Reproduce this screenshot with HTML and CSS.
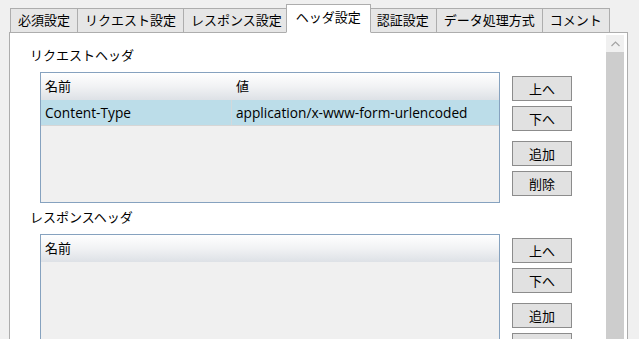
FILE: index.html
```html
<!DOCTYPE html>
<html lang="ja">
<head>
    <meta charset="UTF-8">
    <title>ヘッダ設定</title>
    <link rel="stylesheet" href="styles.css">
</head>
<body>
    <div class="tabs">
        <div class="tab">必須設定</div>
        <div class="tab">リクエスト設定</div>
        <div class="tab">レスポンス設定</div>
        <div class="tab active">ヘッダ設定</div>
        <div class="tab">認証設定</div>
        <div class="tab">データ処理方式</div>
        <div class="tab">コメント</div>
    </div>
    <div class="panel">
        <div class="content">
            <div class="group-title">リクエストヘッダ</div>
            <div class="group">
                <div class="grid">
                    <div class="grid-head">
                        <span class="col-name">名前</span>
                        <span class="col-value">値</span>
                    </div>
                    <div class="grid-row selected">
                        <span class="col-name">Content-Type</span>
                        <span class="col-value">application/x-www-form-urlencoded</span>
                    </div>
                </div>
                <div class="buttons">
                    <button>上へ</button>
                    <button>下へ</button>
                    <button class="spaced">追加</button>
                    <button>削除</button>
                </div>
            </div>

            <div class="group-title second">レスポンスヘッダ</div>
            <div class="group">
                <div class="grid">
                    <div class="grid-head">
                        <span class="col-name">名前</span>
                    </div>
                </div>
                <div class="buttons">
                    <button>上へ</button>
                    <button>下へ</button>
                    <button class="spaced">追加</button>
                    <button>削除</button>
                </div>
            </div>
        </div>
        <div class="scrollbar">
            <div class="scroll-arrow">
                <svg width="9" height="6" viewBox="0 0 9 6"><path d="M0.5 5 L4.5 1 L8.5 5" fill="none" stroke="#a3a3a3" stroke-width="1.2"/></svg>
            </div>
            <div class="scroll-thumb"></div>
        </div>
    </div>
</body>
</html>
```

FILE: styles.css
```css
body {
    margin: 0;
    background-color: #f0f0f0;
    font-family: "Noto Sans CJK JP", "Noto Sans", sans-serif;
    font-size: 13px;
    color: #000;
    overflow: hidden;
    height: 339px;
}
.tabs {
    display: flex;
    align-items: flex-end;
    height: 33px;
    padding-left: 10px;
    position: relative;
    z-index: 1;
}
.tab {
    box-sizing: border-box;
    height: 25px;
    line-height: 22px;
    padding: 0 7px;
    background-color: #e6e6e6;
    border: 1px solid #adadad;
    margin-right: -1px;
    white-space: nowrap;
}
.tab.active {
    height: 29px;
    line-height: 24px;
    background-color: #fff;
    border-bottom-color: #fff;
    margin: 0 -2px 0 -3px;
    padding: 0 9px;
    position: relative;
    z-index: 2;
}
.panel {
    display: flex;
    margin: -1px 0 0 9px;
    width: 619px;
    height: 320px;
    box-sizing: border-box;
    background-color: #fff;
    border: 1px solid #adadad;
}
.content {
    flex: 1;
    padding: 13px 0 0 20px;
}
.group-title {
    height: 18px;
    line-height: 18px;
    margin-bottom: 8px;
}
.group-title.second {
    margin-top: 5px;
}
.group {
    display: flex;
    margin-left: 10px;
}
.grid {
    box-sizing: border-box;
    width: 460px;
    height: 131px;
    border: 1px solid #86a2bf;
    background-color: #f0f0f0;
}
.grid-head,
.grid-row {
    display: flex;
    line-height: 26px;
}
.grid-head {
    height: 27px;
    background: linear-gradient(#ffffff, #f1f2f4 50%, #dde1e6);
}
.grid-row {
    height: 25px;
    border-bottom: 1px solid #d6d6d6;
    font-family: "Open Sans", "Noto Sans CJK JP", sans-serif;
    font-size: 13.7px;
}
.grid-row.selected {
    background-color: #bcdde9;
}
.col-name {
    width: 186px;
    padding-left: 4px;
    border-right: 1px solid transparent;
}
.grid-row .col-name {
    border-right-color: #d2d9dc;
}
.col-value {
    padding-left: 4px;
    white-space: nowrap;
}
.buttons {
    display: flex;
    flex-direction: column;
    margin: 4px 0 0 12px;
}
button {
    box-sizing: border-box;
    width: 60px;
    height: 25px;
    margin-bottom: 5px;
    padding: 0;
    font-family: inherit;
    font-size: 13px;
    color: #000;
    background-color: #e1e1e1;
    border: 1px solid #8c8c8c;
}
button.spaced {
    margin-top: 5px;
}
.scrollbar {
    display: flex;
    flex-direction: column;
    width: 18px;
    margin: 2px 3px 0 0;
}
.scroll-arrow {
    height: 17px;
    display: flex;
    justify-content: center;
    align-items: center;
    background-color: #f0f0f0;
}
.scroll-thumb {
    flex: 1;
    background-color: #cdcdcd;
}
```
